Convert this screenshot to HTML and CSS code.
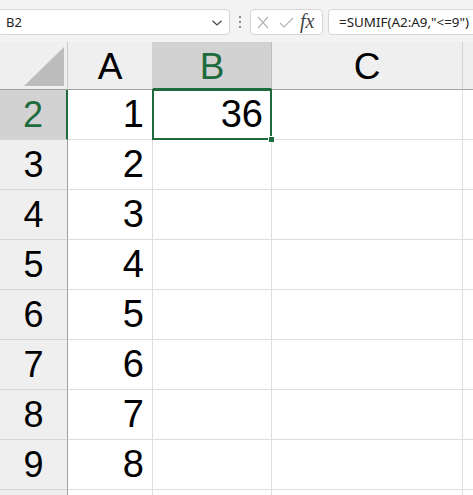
FILE: index.html
```html
<!DOCTYPE html>
<html lang="en">
<head>
    <meta charset="UTF-8">
    <meta name="viewport" content="width=device-width, initial-scale=1.0">
    <title>SUMIF</title>
    <link rel="stylesheet" href="styles.css">
</head>
<body>
    <div class="toolbar">
        <div class="name-box">
            <span>B2</span>
            <svg class="chevron" width="12" height="8" viewBox="0 0 12 8"><path d="M1.5 1.8 L6 6 L10.5 1.8" fill="none" stroke="#444" stroke-width="1.2"/></svg>
        </div>
        <div class="dots"><i></i><i></i><i></i></div>
        <div class="fx-box">
            <svg width="12" height="13" viewBox="0 0 12 13"><path d="M1 1 L11 12 M11 1 L1 12" stroke="#b4b4b4" stroke-width="1.2" fill="none"/></svg>
            <svg width="15" height="13" viewBox="0 0 15 13"><path d="M1 7 L5 11 L14 2" stroke="#b4b4b4" stroke-width="1.2" fill="none"/></svg>
            <span class="fx">fx</span>
        </div>
        <div class="formula">=SUMIF(A2:A9,"&lt;=9")</div>
    </div>

    <div class="sheet">
        <div class="corner"><div class="triangle"></div></div>
        <div class="col-head">A</div>
        <div class="col-head active">B</div>
        <div class="col-head">C</div>
        <div class="col-head"></div>

        <div class="row-head active">2</div>
        <div class="cell">1</div>
        <div class="cell selected">36<span class="handle"></span></div>
        <div class="cell"></div>
        <div class="cell"></div>

        <div class="row-head">3</div>
        <div class="cell">2</div>
        <div class="cell"></div>
        <div class="cell"></div>
        <div class="cell"></div>

        <div class="row-head">4</div>
        <div class="cell">3</div>
        <div class="cell"></div>
        <div class="cell"></div>
        <div class="cell"></div>

        <div class="row-head">5</div>
        <div class="cell">4</div>
        <div class="cell"></div>
        <div class="cell"></div>
        <div class="cell"></div>

        <div class="row-head">6</div>
        <div class="cell">5</div>
        <div class="cell"></div>
        <div class="cell"></div>
        <div class="cell"></div>

        <div class="row-head">7</div>
        <div class="cell">6</div>
        <div class="cell"></div>
        <div class="cell"></div>
        <div class="cell"></div>

        <div class="row-head">8</div>
        <div class="cell">7</div>
        <div class="cell"></div>
        <div class="cell"></div>
        <div class="cell"></div>

        <div class="row-head">9</div>
        <div class="cell">8</div>
        <div class="cell"></div>
        <div class="cell"></div>
        <div class="cell"></div>

        <div class="row-head"></div>
        <div class="cell"></div>
        <div class="cell"></div>
        <div class="cell"></div>
        <div class="cell"></div>
    </div>
</body>
</html>
```

FILE: styles.css
```css
* {
    box-sizing: border-box;
}

body {
    margin: 0;
    background-color: #fff;
    font-family: 'Liberation Sans', Arial, sans-serif;
    overflow: hidden;
    width: 473px;
    height: 495px;
}

/* barre de formule */
.toolbar {
    height: 42px;
    background-color: #f3f3f3;
    display: flex;
    align-items: flex-start;
    padding-top: 9px;
}

.name-box {
    width: 232px;
    height: 26px;
    margin-left: -2px;
    background-color: #fff;
    border: 1px solid #d6d6d6;
    border-radius: 4px;
    display: flex;
    align-items: center;
    justify-content: space-between;
    padding: 0 6px 0 7px;
    font-family: 'Noto Sans', sans-serif;
    font-size: 13px;
    color: #222;
}

.chevron {
    margin-top: 1px;
}

.dots {
    width: 20px;
    height: 26px;
    display: flex;
    flex-direction: column;
    align-items: center;
    justify-content: center;
    gap: 3px;
}

.dots i {
    width: 2px;
    height: 2px;
    background-color: #8a8a8a;
}

.fx-box {
    width: 73px;
    height: 26px;
    background-color: #fff;
    border: 1px solid #d6d6d6;
    border-radius: 4px;
    display: flex;
    align-items: center;
    gap: 10px;
    padding-left: 6px;
}

.fx {
    font-family: 'Liberation Serif', serif;
    font-style: italic;
    font-size: 20px;
    color: #444;
    margin-left: -4px;
    margin-top: -2px;
}

.formula {
    flex: 1;
    height: 26px;
    margin-left: 5px;
    margin-right: -10px;
    background-color: #fff;
    border: 1px solid #d6d6d6;
    border-radius: 4px;
    padding-left: 10px;
    font-family: 'Noto Sans', sans-serif;
    font-size: 13.4px;
    line-height: 24px;
    color: #222;
}

/* grille */
.sheet {
    display: grid;
    grid-template-columns: 68px 85px 119px 191px 20px;
    grid-template-rows: 48px;
    grid-auto-rows: 50px;
    height: 453px;
    overflow: hidden;
}

.corner {
    position: relative;
    background-color: #efefef;
    border-right: 1px solid #c8c8c8;
    border-bottom: 1px solid #a0a0a0;
}

.triangle {
    position: absolute;
    right: 3px;
    bottom: 3px;
    width: 40px;
    height: 39px;
    background-color: #bcbcbc;
    clip-path: polygon(100% 0, 100% 100%, 0 100%);
}

.col-head {
    background-color: #efefef;
    border-right: 1px solid #d2d2d2;
    border-bottom: 1px solid #a0a0a0;
    display: flex;
    align-items: center;
    justify-content: center;
    font-size: 37px;
    color: #000;
    padding-top: 2px;
}

.col-head.active {
    background-color: #d2d2d2;
    color: #1e6b3d;
    border-bottom: 2px solid #1e6b3d;
    border-right-color: #bdbdbd;
    padding-top: 3px;
}

.row-head {
    background-color: #efefef;
    border-right: 1px solid #a0a0a0;
    border-bottom: 1px solid #d6d6d6;
    display: flex;
    align-items: center;
    justify-content: center;
    font-size: 36px;
    color: #000;
}

.row-head.active {
    background-color: #d2d2d2;
    color: #1e6b3d;
    border-right: 2px solid #1e6b3d;
}

.cell {
    position: relative;
    border-right: 1px solid #dedede;
    border-bottom: 1px solid #dedede;
    display: flex;
    align-items: center;
    justify-content: flex-end;
    padding-right: 8px;
    font-size: 38px;
    color: #000;
}

.cell.selected::after {
    content: "";
    position: absolute;
    top: -1px;
    left: -1px;
    right: -1px;
    bottom: -1px;
    border: 2px solid #1e6b3d;
}

.handle {
    position: absolute;
    right: -4px;
    bottom: -4px;
    width: 7px;
    height: 7px;
    background-color: #1e6b3d;
    border: 1px solid #fff;
    z-index: 2;
}
```
